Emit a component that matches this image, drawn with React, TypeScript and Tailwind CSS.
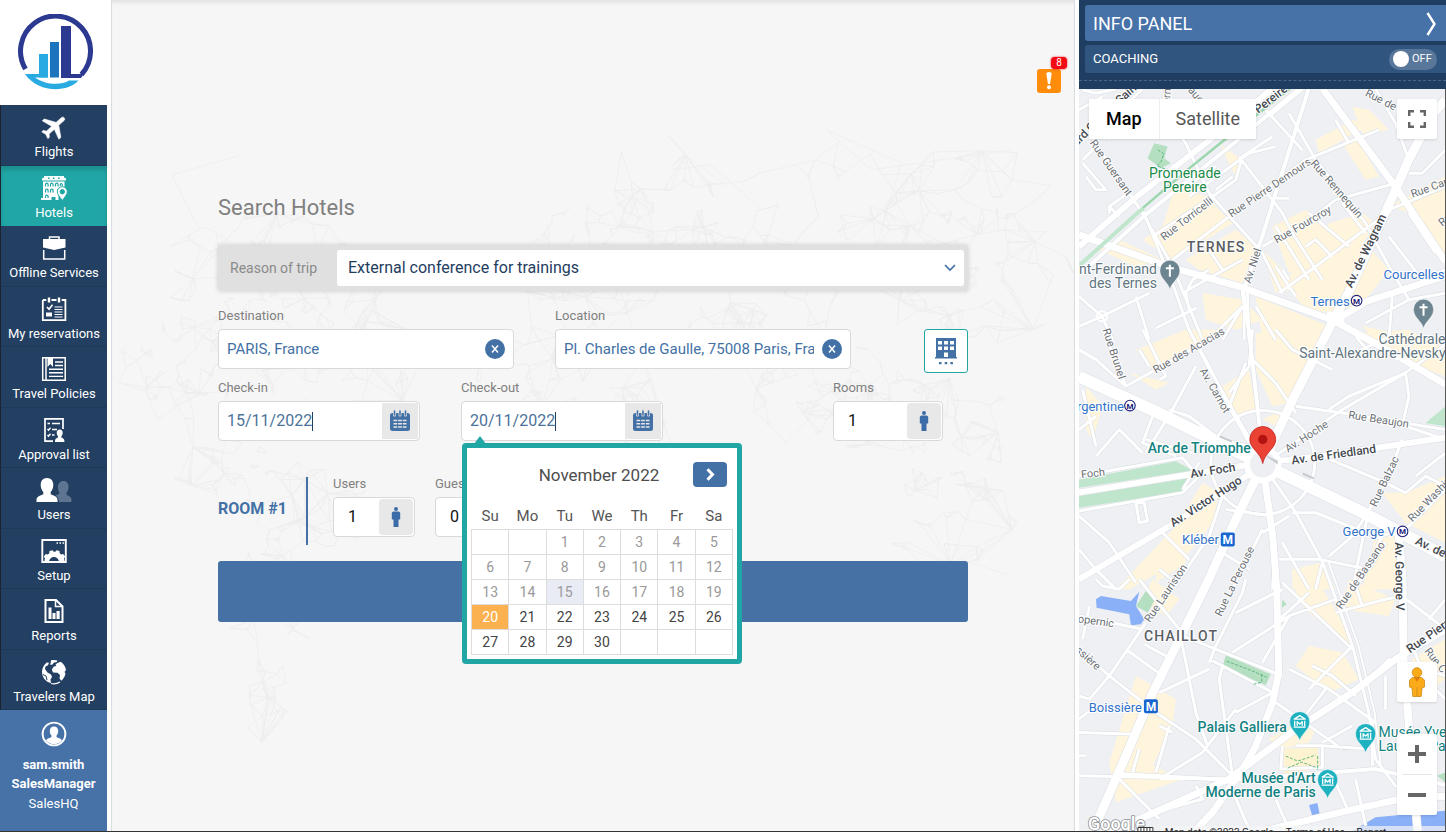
import React from "react";

type IconProps = { className?: string };

/* ---------- Logo and icons ---------- */

function Logo() {
  return (
    <svg width="76" height="76" viewBox="0 0 76 76" aria-label="Company logo" role="img">
      <path d="M8.500 55A35 35 0 1 1 64.500 60.500" fill="none" stroke="#2b3990" strokeWidth="5" />
      <path d="M44 12h10v48h8.500l5-1-3.500 5H44z" fill="#2b3990" />
      <rect x="33" y="28" width="9" height="35.500" fill="#1c75bc" />
      <path d="M22 40h9v23.500h-9z" fill="#29abe2" />
      <path d="M8 60h22.500v3.500H18c10 7.500 26 8 34 3h9.500C50 79 21 79 8 60z" fill="#29abe2" />
    </svg>
  );
}

function Svg({ children }: { children: React.ReactNode }) {
  return (
    <svg width="28" height="26" viewBox="0 0 28 26" fill="none" stroke="#fff" strokeWidth="1.500" aria-hidden="true">
      {children}
    </svg>
  );
}

const PlaneIcon = () => (
  <Svg>
    <path
      transform="translate(14.500 12.500) rotate(48) scale(1.3) translate(-11.500 -12)"
      fill="#fff"
      stroke="#fff"
      strokeWidth=".5"
      strokeLinejoin="round"
      d="M21 16v-2l-8-5V3.500c0-.83-.67-1.500-1.500-1.500S10 2.670 10 3.500V9l-8 5v2l8-2.500V19l-2 1.500V22l3.500-1 3.500 1v-1.500L13 19v-5.500l8 2.500z"
    />
  </Svg>
);

const HotelIcon = () => (
  <Svg>
    <path fill="#fff" stroke="none" d="M4 1h20v1.500l2 1v2H2v-2l2-1zM3 6.500h21.500V13h-3l-3 2v10h-3v-3h-4v3H1v-2h2z" />
    <g fill="#21a6a6" stroke="none">
      <rect x="8" y="2.500" width="1.500" height="1.500" />
      <rect x="13" y="2.500" width="1.500" height="1.500" />
      <rect x="18" y="2.500" width="1.500" height="1.500" />
    </g>
    <g stroke="#21a6a6" strokeWidth="1.200">
      <path d="M5.500 11.500V9.500a1.300 1.300 0 0 1 2.600 0v2M10.500 11.500V9.500a1.300 1.300 0 0 1 2.600 0v2M15.500 11.500V9.500a1.300 1.300 0 0 1 2.600 0v2M20.300 11V9.500a1 1 0 0 1 2 0V11" />
      <path d="M5.500 17.500V15.500a1.300 1.300 0 0 1 2.600 0v2M10.500 17.500V15.500a1.300 1.300 0 0 1 2.600 0v2M5.500 23v-1.500a1.300 1.300 0 0 1 2.600 0V23" />
    </g>
    <path fill="#fff" stroke="#21a6a6" strokeWidth="1" fillRule="evenodd" d="M22.300 25.500c-3-4-5-6.300-5-8.800a5 5 0 0 1 10 0c0 2.500-2 4.800-5 8.800zm0-11a2.200 2.200 0 1 0 0 4.400 2.200 2.200 0 0 0 0-4.400z" />
  </Svg>
);

const BriefcaseIcon = () => (
  <Svg>
    <path d="M9.500 4V2h9.500v2" />
    <path fill="#fff" stroke="none" d="M3 4h22.500v8.500L14.200 15 3 12.500z" />
    <path d="M3.700 15v9h21v-9" />
  </Svg>
);

const ReservationsIcon = () => (
  <Svg>
    <path strokeWidth="1.800" d="M2.800 4h3.500M11.500 4h5M21.700 4h3.700v20.200H2.800V4" />
    <path strokeWidth="2.400" d="M9 1.500v5M19 1.500v5" />
    <path strokeWidth="1.600" d="M7 11l2 2.300 3.500-4.600" />
    <path fill="#fff" stroke="none" d="M6 16.500h6v4H6z" />
    <path strokeWidth="1.100" d="M14.500 11h8M14.500 13.500h8M14.500 16h8M14.500 18.500h8M14.500 21h8" />
  </Svg>
);

const PoliciesIcon = () => (
  <Svg>
    <path d="M2.700 1.800h22.500v22.400H2.700zM6 2v22" />
    <path fill="#fff" stroke="none" d="M7.500 1.500h5.500V11l-2.700-3-2.800 3z" />
    <path strokeWidth="1.400" d="M15 6h8M15 9.500h8M9 13.200h14M9 16.800h14M9 20.400h14" />
  </Svg>
);

const ApprovalIcon = () => (
  <Svg>
    <path strokeWidth="1.700" d="M13 24.200H5V1.800h18V12" />
    <path strokeWidth="1.400" d="M7.500 6.500h2.500M12 6.500h8M12 12.500h5M12 18h2.500M7.500 12l1 1.200 2-2.400M7.500 18l1 1.200 2-2.400" />
    <path fill="#fff" stroke="none" d="M19.700 12.500c2 0 3 1.500 3 3.200 0 1.500-.7 2.700-1.300 3.500v1.300c1.500.8 3 1.200 3 3.500v1H15v-1c0-2.300 1.500-2.700 3-3.500v-1.300c-.7-.8-1.300-2-1.300-3.500 0-1.700 1-3.200 3-3.200z" />
  </Svg>
);

const UsersIcon = () => (
  <svg width="36" height="26" viewBox="0 0 36 26" aria-hidden="true">
    <path fill="#5d7590" d="M27.500 4c3.500 0 5 2.500 5 6 0 2.500-1 4.500-2 5.800v2c2.500 1.300 5 2 5 5.200v2H23c0-4-2-5.500-3.500-6.500 2-.8 4-1.200 4-2.700-1-1.300-1.500-3.300-1.500-5.800 0-3.500 2-6 5.500-6z" />
    <path fill="#fff" d="M11 1c4.300 0 6.300 3 6.300 7 0 3-1.200 5.500-2.600 7v2.300c3 1.500 6.800 2.200 6.800 5.700v2H.5v-2c0-3.500 3.800-4.200 6.800-5.700V15c-1.400-1.500-2.600-4-2.600-7 0-4 2-7 6.300-7z" />
  </svg>
);

const SetupIcon = () => (
  <Svg>
    <path strokeWidth="1.900" d="M2.300 2h23.500v22H2.300z" />
    <path strokeWidth="1.500" d="M16.500 5h1.500M19.500 5H21M22.500 5H24" />
    <path fill="#fff" stroke="none" d="M4.500 24c0-2 .2-2.500.5-3.500L3.800 18.500l2-2.500 2 .5 1.500-1.300.2-2.200 3-.8 1.200 1.600h1.600l1.200-1.600 3 .8.200 2.200 1.500 1.300 2-.5 2 2.500-1.200 2c.3 1 .5 1.500.5 3.500h-5.500a5 5 0 0 0-10 0z" />
  </Svg>
);

const ReportsIcon = () => (
  <Svg>
    <path strokeWidth="2" d="M5.500 2h10.500l6.500 6.500V24h-17z" />
    <path d="M15.500 2v6.500h7" strokeWidth="1.500" />
    <path fill="#fff" stroke="none" d="M8.500 9.500h3V21h-3zM12.500 15h3v6h-3zM16.500 13h3.200v8h-3.200z" />
  </Svg>
);

const GlobeIcon = () => (
  <Svg>
    <path fill="#fff" stroke="none" d="M11 1.300c2-.5 4.500-.4 6.500.3l-1 1.600-2.500.4-1.500 2-2.200.5zM17.500 4l3-1.200c3 1.800 5 4.600 5.500 8.200l-1.500 2 1 1.500c-.6 3-2 5.400-4.200 7.200l-1.800-2.200.5-3.500-2.500-2.200-4.500-.3-1.200-3 2-3 2.500-.5-.8-1.500z" />
    <path fill="#fff" stroke="none" d="M2 12.500c.2-3.500 2-6.800 4.800-9l2.200.2-1 2.500-2.500 1.300L5 10l2.500 3.500 3.500 2 1 2.500-1.500 2.500.5 3.500C6 23 2 18.500 2 12.500z" />
    <path strokeWidth="1.200" d="M11 24.500c3.500.8 6.500 0 9-1.500" />
    <path stroke="#22405f" strokeWidth="1" d="M3 15.500l3 1.500 1 4" />
  </Svg>
);

const ProfileIcon = () => (
  <Svg>
    <circle cx="14" cy="13" r="11.400" strokeWidth="1.900" />
    <path fill="#fff" stroke="none" d="M14 5.500c2.800 0 4.200 1.800 4.200 4.500 0 2-.8 3.500-1.700 4.500v1.600c1.800 1 4.200 1.300 5.500 3.400a10.400 10.400 0 0 1-16 0c1.300-2.100 3.700-2.400 5.500-3.400v-1.600c-.9-1-1.700-2.500-1.700-4.500 0-2.700 1.400-4.500 4.200-4.500z" />
  </Svg>
);

const CalendarIcon = () => (
  <svg width="22" height="22" viewBox="0 0 22 22" aria-hidden="true">
    <rect x="1" y="3" width="20" height="18" rx="2.500" fill="#4371a5" />
    <path d="M5.500 1v4M11 1v4M16.500 1v4" stroke="#e8e8e8" strokeWidth="3" strokeLinecap="round" />
    <path d="M5.500 1v4M11 1v4M16.500 1v4" stroke="#4371a5" strokeWidth="1.600" strokeLinecap="round" />
    <path d="M4.500 10.500h13M4.500 13.800h13M4.500 17h13" stroke="#e8e8e8" strokeWidth="1.500" strokeDasharray="3.700 .95" />
  </svg>
);

const PersonIcon = () => (
  <svg width="10" height="20" viewBox="0 0 10 20" fill="#3c6ca8" aria-hidden="true">
    <circle cx="5" cy="2" r="2" />
    <path d="M2.500 4.500h5A1.800 1.800 0 0 1 9.200 6v6.500H7.500V20h-5v-7.500H.8V6a1.800 1.800 0 0 1 1.700-1.500z" />
  </svg>
);

const BuildingIcon = () => (
  <svg width="24" height="28" viewBox="0 0 24 28" aria-hidden="true">
    <path fill="#4371a5" d="M2 1h20v19h1v1.500H1V20h1z" />
    <path fill="#fff" d="M4 4h4v3.500H4zM10 4h4v3.500h-4zM16 4h4v3.500h-4zM4 9.500h4V13H4zM10 9.500h4V13h-4zM16 9.500h4V13h-4zM10 15.500h4V20h-4z" />
    <path fill="#4371a5" d="M5 25h2.500v2.200H5zM10.700 25h2.500v2.200h-2.500zM16.400 25h2.500v2.200h-2.500z" />
  </svg>
);

const ChevronIcon = ({ className }: IconProps) => (
  <svg className={className} width="12" height="8" viewBox="0 0 12 8" fill="none" stroke="#4371a5" strokeWidth="1.700" aria-hidden="true">
    <path d="M1 1l5 5 5-5" />
  </svg>
);

/* ---------- Sidebar ---------- */

const navItems = [
  { label: "Flights", icon: <PlaneIcon /> },
  { label: "Hotels", icon: <HotelIcon />, active: true },
  { label: "Offline Services", icon: <BriefcaseIcon /> },
  { label: "My reservations", icon: <ReservationsIcon /> },
  { label: "Travel Policies", icon: <PoliciesIcon /> },
  { label: "Approval list", icon: <ApprovalIcon /> },
  { label: "Users", icon: <UsersIcon /> },
  { label: "Setup", icon: <SetupIcon /> },
  { label: "Reports", icon: <ReportsIcon /> },
  { label: "Travelers Map", icon: <GlobeIcon /> },
];

function Sidebar() {
  return (
    <div className="flex w-[107px] shrink-0 flex-col bg-white text-white">
      <div className="flex h-[105px] justify-center pt-[14px] pl-[3px]">
        <Logo />
      </div>
      <nav className="grid h-[605px] auto-rows-fr border-l border-[#1b2430]">
        {navItems.map((item) => (
          <a
            key={item.label}
            href="#"
            className={
              item.active
                ? "flex flex-col items-center bg-[#21a6a6] pt-[9px] shadow-[inset_0_4px_4px_rgba(0,0,0,0.15)]"
                : "flex flex-col items-center border-b border-[#1f3957] bg-[#233f61] pt-[9px]"
            }
          >
            {item.icon}
            <span className="mt-[3px] text-[13px] leading-[18px] whitespace-nowrap">{item.label}</span>
          </a>
        ))}
      </nav>
      <a href="#" className="flex flex-1 flex-col items-center bg-[#4672a8] pt-[11px] text-[13px] leading-5">
        <ProfileIcon />
        <span className="mt-2 leading-[19px] font-bold">sam.smith</span>
        <span className="font-bold leading-5">SalesManager</span>
        <span>SalesHQ</span>
      </a>
    </div>
  );
}

/* ---------- Network world map behind the form ---------- */

type Blob = [number, number, number, number, number];

const blobs: Blob[] = [
  [150, 300, 120, 90, 150],
  [230, 360, 90, 60, 90],
  [70, 380, 70, 60, 60],
  [110, 470, 50, 40, 40],
  [190, 520, 80, 60, 60],
  [160, 600, 60, 60, 40],
  [155, 700, 25, 60, 26],
  [480, 260, 80, 60, 90],
  [560, 190, 70, 60, 35],
  [450, 380, 90, 60, 70],
  [510, 470, 60, 80, 45],
  [620, 300, 120, 80, 110],
  [760, 220, 160, 80, 80],
  [860, 280, 110, 70, 90],
  [720, 400, 80, 60, 90],
  [820, 430, 80, 70, 100],
  [840, 520, 70, 50, 35],
  [900, 180, 60, 40, 12],
];

function buildNetwork() {
  let seed = 7;
  const rand = () => {
    seed = (seed * 16807) % 2147483647;
    return seed / 2147483647;
  };
  const points: [number, number][] = [];
  for (const [cx, cy, rx, ry, n] of blobs) {
    for (let i = 0; i < n; i++) {
      const a = rand() * Math.PI * 2;
      const r = Math.pow(rand(), 0.7);
      points.push([Math.round(cx + Math.cos(a) * r * rx), Math.round(cy + Math.sin(a) * r * ry)]);
    }
  }
  let d = "";
  points.forEach(([x, y], i) => {
    points
      .map(([px, py], j) => ({ j, dist: (px - x) ** 2 + (py - y) ** 2 }))
      .filter((p) => p.j !== i)
      .sort((a, b) => a.dist - b.dist)
      .slice(0, i % 11 === 0 ? 12 : 2)
      .forEach((p) => {
        d += `M${x} ${y}L${points[p.j][0]} ${points[p.j][1]}`;
      });
  });
  return { d, points };
}

const network = buildNetwork();

function NetworkBackdrop() {
  return (
    <svg
      className="absolute inset-0 h-full w-full"
      viewBox="0 0 963 832"
      preserveAspectRatio="xMidYMin slice"
      fill="none"
      stroke="#eeeeee"
      strokeWidth=".8"
      aria-hidden="true"
    >
      <path d={network.d} />
      <path d="M60 175L130 155M60 175L85 225M715 130L790 163L770 230M715 130L760 170L900 150M560 170L600 165L650 210M850 560L895 575" />
      {network.points
        .filter((_, i) => i % 8 === 0)
        .map(([x, y], i) => (
          <circle key={i} cx={x} cy={y} r="2" />
        ))}
    </svg>
  );
}

/* ---------- Search form ---------- */

const labelClass = "mb-[3px] block text-[13px] leading-5 text-[#808080]";
const boxClass = "flex h-10 items-center rounded-sm border border-[#d9d9d9] bg-white";

function PlaceField({ id, label, value }: { id: string; label: string; value: string }) {
  return (
    <div className="w-[296px]">
      <label htmlFor={id} className={labelClass}>
        {label}
      </label>
      <div className={boxClass + " pr-2 pl-2"}>
        <input id={id} defaultValue={value} className="w-0 flex-1 bg-transparent text-[15px] text-[#4371a5] outline-none" />
        <button
          type="button"
          aria-label={"Clear " + label}
          className="ml-2 flex size-5 items-center justify-center rounded-full bg-[#4371a5]"
        >
          <svg width="8" height="8" viewBox="0 0 8 8" stroke="#fff" strokeWidth="1.500" aria-hidden="true">
            <path d="M1 .5l6 7M7 .5l-6 7" />
          </svg>
        </button>
      </div>
    </div>
  );
}

function DateField({ id, label, value, children }: { id: string; label: string; value: string; children?: React.ReactNode }) {
  return (
    <div className="relative w-[202px]">
      <label htmlFor={id} className={labelClass}>
        {label}
      </label>
      <div className={boxClass + " justify-between p-px pl-2"}>
        <span className="flex items-center">
          <input
            id={id}
            defaultValue={value}
            className="[field-sizing:content] bg-transparent text-base text-[#4c7399] outline-none"
          />
          <span className="h-[19px] w-px bg-[#233f61]" />
        </span>
        <button type="button" aria-label={"Open " + label + " calendar"} className="flex h-9 w-9 items-center justify-center bg-[#e8e8e8]">
          <CalendarIcon />
        </button>
      </div>
      {children}
    </div>
  );
}

function CountField({ id, label, value, wide }: { id: string; label: string; value: string; wide?: boolean }) {
  return (
    <div className={wide ? "w-[110px]" : "w-[82px]"}>
      <label htmlFor={id} className={labelClass}>
        {label}
      </label>
      <div className={boxClass + " p-px pl-[14px]"}>
        <input id={id} defaultValue={value} className="w-0 flex-1 bg-transparent text-base text-[#111] outline-none" />
        <span className="flex h-9 w-[34px] items-center justify-center rounded-sm bg-[#e8e8e8]">
          <PersonIcon />
        </span>
      </div>
    </div>
  );
}

const weekdays = ["Su", "Mo", "Tu", "We", "Th", "Fr", "Sa"];
const weeks: (number | null)[][] = [
  [null, null, 1, 2, 3, 4, 5],
  [6, 7, 8, 9, 10, 11, 12],
  [13, 14, 15, 16, 17, 18, 19],
  [20, 21, 22, 23, 24, 25, 26],
  [27, 28, 29, 30, null, null, null],
];

function dayClass(day: number) {
  if (day === 20) return "block h-6 w-full bg-[#fcb150] text-sm text-white";
  if (day === 15) return "block h-6 w-full bg-[#e9ecf5] text-sm text-[#999]";
  if (day < 20) return "block h-6 w-full text-sm text-[#999]";
  return "block h-6 w-full text-sm text-[#444]";
}

function CalendarPopup() {
  return (
    <div className="absolute top-[65px] left-px z-10 w-[280px] rounded-sm border-[5px] border-[#21a6a6] bg-white px-1 pb-1">
      <svg className="absolute -top-3 left-[7px]" width="12" height="8" viewBox="0 0 12 8" aria-hidden="true">
        <path d="M6 0l6 8H0z" fill="#21a6a6" />
      </svg>
      <div className="grid h-14 grid-cols-[1fr_auto_1fr] items-center pr-1.5">
        <span className="w-9" />
        <span className="text-[17px] text-[#4d4d4d]">November 2022</span>
        <button
          type="button"
          aria-label="Next month"
          className="mb-1 flex h-[25px] w-[34px] items-center justify-center justify-self-end rounded-sm bg-[#4371a5]"
        >
          <svg width="9" height="13" viewBox="0 0 9 13" fill="none" stroke="#fff" strokeWidth="3" aria-hidden="true">
            <path d="M1.500 1.200l5 5.300-5 5.300" />
          </svg>
        </button>
      </div>
      <table className="w-full table-fixed border-collapse">
        <thead>
          <tr>
            {weekdays.map((d) => (
              <th key={d} className="h-[25px] p-0 text-[15px] leading-6 font-normal text-[#555]">
                {d}
              </th>
            ))}
          </tr>
        </thead>
        <tbody>
          {weeks.map((week, i) => (
            <tr key={i}>
              {week.map((day, j) => (
                <td key={j} className="h-[25px] border border-[#ddd] p-0 text-center">
                  {day && (
                    <button type="button" disabled={day < 20} className={dayClass(day)}>
                      {day}
                    </button>
                  )}
                </td>
              ))}
            </tr>
          ))}
        </tbody>
      </table>
    </div>
  );
}

function SearchForm() {
  return (
    <form className="relative mx-auto w-full max-w-[750px] pt-[193px]">
      <h1 className="text-[22px] leading-[30px] text-[#808080]">Search Hotels</h1>
      <div className="mt-[22px] flex h-[46px] items-center rounded-sm bg-[#e0e0e0] pr-1 pl-3 shadow-[0_0_5px_rgba(0,0,0,0.18)]">
        <label htmlFor="reason" className="w-[107px] text-sm text-[#8a8a8a]">
          Reason of trip
        </label>
        <div className="relative flex-1">
          <select
            id="reason"
            className="h-9 w-full appearance-none rounded-[3px] bg-white pr-8 pl-[11px] text-base text-[#1f3d5f] outline-none"
          >
            <option>External conference for trainings</option>
          </select>
          <ChevronIcon className="pointer-events-none absolute top-[14px] right-2" />
        </div>
      </div>
      <div className="mt-[15px] flex items-end">
        <PlaceField id="destination" label="Destination" value="PARIS, France" />
        <div className="ml-[41px]">
          <PlaceField id="location" label="Location" value="Pl. Charles de Gaulle, 75008 Paris, France" />
        </div>
        <button
          type="button"
          aria-label="Hotel filters"
          className="-mb-1 ml-auto flex size-11 items-center justify-center rounded-[3px] border border-[#21a6a6] bg-white"
        >
          <BuildingIcon />
        </button>
      </div>
      <div className="mt-[9px] flex pr-[25px]">
        <DateField id="checkin" label="Check-in" value="15/11/2022" />
        <div className="ml-[41px]">
          <DateField id="checkout" label="Check-out" value="20/11/2022">
            <CalendarPopup />
          </DateField>
        </div>
        <div className="ml-auto">
          <CountField id="rooms" label="Rooms" value="1" wide />
        </div>
      </div>
      <div className="mt-[33px] flex">
        <div className="mt-[3px] flex h-[68px] w-[90px] items-center border-r-2 border-[#4371a5] pb-1">
          <span className="text-base font-bold text-[#4371a5]">ROOM #1</span>
        </div>
        <div className="ml-[25px] flex gap-5">
          <CountField id="users" label="Users" value="1" />
          <CountField id="guests" label="Guests" value="0" />
        </div>
      </div>
      <button type="submit" aria-label="Search" className="mt-4 block h-[61px] w-full rounded-[3px] bg-[#4571a5]" />
    </form>
  );
}

/* ---------- Street map ---------- */

/* Tiles hold coordinates at triple scale; each is shifted down by its offset. */
const tiles = [
  {
    dy: 0,
    yellow:
      "M300 310L390 350L470 430L340 510L290 540L200 480L260 440ZM70 510L130 480L260 540L180 560ZM330 540L480 450L540 500L500 610L370 570ZM720 180L830 120L890 130L730 220ZM800 190L840 170L910 290L870 300ZM590 440L690 390L780 470L720 540L640 580ZM760 430L860 400L900 430L850 510L720 620L600 640L560 510L640 590ZM650 640L860 480L940 570L870 660L780 700L700 700ZM940 380L1110 290L1110 560L1010 400ZM380 640L500 660L560 720L480 750L390 720ZM540 650L760 740L700 780L560 780ZM430 190L500 240L480 290ZM830 80L880 90L940 150L860 160ZM860 740L1110 790L900 780Z",
    minor:
      "M20 30L60 40L120 27M45 170L200 400L290 560L380 780M9 90L80 50M270 27L265 60M200 27L60 160M230 60L330 190L400 340L470 420L560 520L620 640M490 230L620 400L650 460L740 600M570 90L680 210M640 100L720 240L870 430L940 560L1000 660M800 370L870 460M290 540L460 410L690 240L910 150M230 470L410 350L480 300L500 230L590 170M340 350L520 220L600 200M330 320L420 260M560 500L700 420L780 360L960 310M900 27L960 130L1000 240M1000 280L1040 280L1110 210M940 390L1110 320M610 640L720 560L880 440L950 390M78 710L9 650M9 740L78 710L220 640M78 710L110 780M180 650L220 780M340 690L330 640L350 600L400 570M240 745L360 685M500 680L440 780M515 640L520 780M505 640L505 780M540 680L600 780M400 780L500 680M100 380L170 330M130 410L100 380L100 400M20 250L90 330L60 330L30 290M20 240L60 200M600 355L640 355M690 500L720 480L770 530M600 560L660 650M640 600L620 570M870 730L1000 660L1110 640M950 650L940 780M320 640L500 540M600 440L700 600M700 400L820 500M780 120L820 190M940 470L1040 600L1110 570M1000 400L1080 520M580 110L680 27M60 100L100 180M380 480L440 570M420 330L470 290",
  },
  {
    dy: 750,
    yellow:
      "M180 60L330 0L450 0L350 60L240 130ZM540 10L740 10L640 220L590 230L540 120ZM440 170L520 120L540 240L480 260ZM160 130L280 160L240 180ZM30 170L80 230L50 330L30 300ZM380 460L430 490L410 580L330 680L230 740L160 780L120 780L300 590ZM560 270L620 240L600 290ZM920 490L990 490L1110 440L1110 640L990 580ZM240 660L320 640L330 700L240 760ZM900 620L960 600L970 780L860 780ZM850 10L1000 0L1110 60L1110 140L960 90ZM650 720L740 700L780 780L650 780Z",
    minor:
      "M80 0L150 170M150 170L240 120L430 10M150 170L60 90L9 60M20 180L60 350M9 300L60 260M190 60L220 110M200 0L270 140L250 150M360 110L290 240L210 370M280 240L340 260L420 320M460 190L520 110L530 0M510 100L460 230M340 0L400 110L470 250L520 340M530 90L600 160L660 250M600 0L650 60L770 120M660 230L800 250L1110 300M990 130L1000 200L980 290M760 240L820 200L990 130M740 380L930 460L990 490L1050 440L1110 470M980 330L930 460L880 540L830 780M1110 480L1000 590L920 620L840 780M9 560L100 640L180 760M250 600L340 690M440 500L400 620L290 780M440 670L520 720M450 540L590 560M560 600L470 780M610 690L730 690L880 720M650 550L720 550L920 630M640 560L560 610M760 680L830 620L870 560M60 380L130 300L200 370M210 330L350 370M230 260L200 340L300 380M180 520L190 580L215 575L205 520ZM370 400L320 480M9 440L320 385L350 420M9 545L320 490L370 440M740 700L720 780M880 720L930 640M840 20L900 90M860 60L940 20M960 90L1030 20M9 660L60 720L120 780M600 640L590 780M1020 440L1110 370L1110 380M990 290L1110 330M430 330L520 350M250 720L300 760M620 640L700 780",
  },
  {
    dy: 1500,
    yellow:
      "M230 0L310 60L270 110L200 60ZM180 290L300 360L290 440L230 560L320 600L120 670L100 550ZM650 40L720 0L760 60L830 180L830 200L700 100ZM700 200L800 220L850 300L760 340L660 260ZM580 480L660 430L720 450L700 490L620 510ZM820 0L960 60L940 110L800 90ZM1010 240L1110 180L1110 300L1030 350Z",
    minor:
      "M60 0L80 20L130 30L160 0M9 110L200 150M40 80L20 180M210 130L100 290L40 360M9 420L60 380M9 210L100 290L240 400L360 480L480 600M150 210L260 290M205 195L270 230M190 0L310 150L360 400L395 500M320 170L470 230L620 290M400 250L420 200L500 40L510 0M400 240L440 260L430 300L470 590M440 260L590 340M250 340L400 270M480 100L620 30M470 220L640 110L780 60M620 10L830 210M700 40L600 130M640 270L760 330L900 430M600 370L700 440L800 510M750 330L680 420M740 490L830 440M780 100L930 60L980 50L1110 150M830 200L700 330M710 260L770 290L840 350M9 460L180 465M9 590L460 600M130 600L250 720M190 510L170 580M280 440L240 580M250 440L290 460M480 390L380 520L250 600M590 340L480 400M840 600L870 740M780 610L820 700M600 660L640 752M620 500L615 570L740 565L740 500L660 500M740 500L880 510M890 420L890 560M930 290L930 390M840 20L860 80M860 320L940 240L1110 290M1010 200L1050 300L1110 360M9 530L30 530M9 350L40 360M560 250L640 110M460 610L520 752M360 620L380 660L240 700M1060 120L1110 60",
  },
];

const majors: { d: string; w: number }[] = [
  { d: "M1079 247L1139 195L1223 130L1272 89", w: 6 },
  { d: "M1086 269L1148 213L1243 136L1299 89", w: 4 },
  { d: "M1079 235L1169 267L1243 288L1335 321L1366 302L1446 276", w: 7 },
  { d: "M1323 89L1396 187L1446 262", w: 7 },
  { d: "M1265 460L1293 400L1336 316L1349 293L1396 190L1409 160L1434 113L1446 100", w: 9 },
  { d: "M1336 322L1396 355L1446 385", w: 7 },
  { d: "M1336 312v14", w: 18 },
  { d: "M1079 377L1160 414L1263 465L1363 513L1446 557", w: 12 },
  { d: "M1079 493L1189 475L1263 463L1319 457L1446 438", w: 6 },
  { d: "M1079 580L1169 527L1263 466", w: 6 },
  { d: "M1263 465L1236 520L1209 580L1186 627L1153 693L1119 773L1093 832", w: 9 },
  { d: "M1263 465L1273 537L1277 590L1279 673L1273 703L1256 747L1243 770L1213 813L1195 832", w: 7 },
  { d: "M1263 465L1296 513L1323 563L1353 647L1369 713L1376 760L1396 787L1446 800", w: 3 },
  { d: "M1329 563L1359 647L1375 713L1381 765", w: 2 },
  { d: "M1263 465L1343 410L1406 373L1446 345", w: 3 },
  { d: "M1263 460L1258 410L1249 330L1243 293L1263 235L1276 193L1309 89", w: 4 },
  { d: "M1263 462L1206 363L1189 330L1175 290L1142 208", w: 3 },
  { d: "M1399 533L1403 580L1404 660L1413 770L1418 832", w: 8 },
  { d: "M1446 630L1396 660L1353 693L1296 730L1229 780L1140 820L1110 832", w: 7 },
  { d: "M1119 775L1229 781L1376 770L1446 786", w: 4 },
  { d: "M1263 832L1346 812L1396 801L1446 797", w: 7 },
];

type MapLabel = { t: string; x: number; y: number; r?: number; s?: number; c?: string; b?: boolean; a?: "start" | "end" | "middle" };

const streetLabels: MapLabel[] = [
  { t: "Rue Guersant", x: 1111, y: 168, r: 55, s: 11 },
  { t: "Rue Torricelli", x: 1187, y: 219, r: -38, s: 11 },
  { t: "Rue Pierre Demours", x: 1270, y: 188, r: -34, s: 11 },
  { t: "Rue Rennequin", x: 1337, y: 189, r: 49, s: 11 },
  { t: "Rue Fourcroy", x: 1303, y: 225, r: -30, s: 11 },
  { t: "Rue Cardinet", x: 1441, y: 184, r: -20, s: 11 },
  { t: "Rue de Prony", x: 1395, y: 107, r: 27, s: 11 },
  { t: "Rue de Courcelles", x: 1474, y: 196, r: -40, s: 11 },
  { t: "ern", x: 1167, y: 96, r: -86, s: 11 },
  { t: "auc", x: 1196, y: 95, r: 50, s: 11 },
  { t: "Av. Niel", x: 1253, y: 266, r: -72, s: 11 },
  { t: "Rue Brunel", x: 1114, y: 354, r: 72, s: 11 },
  { t: "Rue des Acacias", x: 1189, y: 351, r: -30, s: 11 },
  { t: "Av. Carnot", x: 1215, y: 391, r: 60, s: 11 },
  { t: "Rue Beaujon", x: 1379, y: 420, r: 9, s: 11 },
  { t: "Av. Hoche", x: 1307, y: 437, r: -33, s: 11 },
  { t: "Foch", x: 1093, y: 474, r: -6, s: 11 },
  { t: "Rue Balzac", x: 1385, y: 482, r: -65, s: 11 },
  { t: "Rue Washington", x: 1438, y: 492, r: -46, s: 11 },
  { t: "Rue de Bassano", x: 1361, y: 576, r: -56, s: 11 },
  { t: "Rue La Perouse", x: 1235, y: 582, r: -64, s: 11 },
  { t: "Rue Lauriston", x: 1166, y: 594, r: -56, s: 11 },
  { t: "opernic", x: 1096, y: 622, r: 8, s: 11 },
  { t: "ssière", x: 1088, y: 659, r: 42, s: 11 },
  { t: "Rue C", x: 1436, y: 661, r: 52, s: 11 },
  { t: "Av. de Wagram", x: 1366, y: 251, r: -64, s: 12, b: true },
  { t: "Pereire", x: 1271, y: 99, r: -38, s: 12, b: true },
  { t: "Sain", x: 1126, y: 94, r: -42, s: 12, b: true },
  { t: "ard G", x: 1084, y: 134, r: -45, s: 12, b: true },
  { t: "Av. Foch", x: 1213, y: 471, r: -9, s: 12, b: true },
  { t: "Av. Victor Hugo", x: 1206, y: 502, r: -33, s: 12, b: true },
  { t: "Av. de Friedland", x: 1334, y: 455, r: -8, s: 12, b: true },
  { t: "Av. des", x: 1434, y: 549, r: 25, s: 12, b: true },
  { t: "Av. George V", x: 1400, y: 577, r: 89, s: 12, b: true },
  { t: "Rue Pierre", x: 1431, y: 635, r: -35, s: 12, b: true },
];

const placeLabels: MapLabel[] = [
  { t: "Promenade", x: 1185, y: 178, s: 14, c: "#188b47" },
  { t: "Pereire", x: 1185, y: 192, s: 14, c: "#188b47" },
  { t: "nt-Ferdinand", x: 1157, y: 274, s: 14, c: "#607580", a: "end" },
  { t: "des Ternes", x: 1157, y: 288, s: 14, c: "#607580", a: "end" },
  { t: "Courcelles", x: 1384, y: 279, s: 13, c: "#3273c9", a: "start" },
  { t: "Ternes", x: 1350, y: 306, s: 13, c: "#3273c9", a: "end" },
  { t: "rgentine", x: 1124, y: 411, s: 13, c: "#3273c9", a: "end" },
  { t: "Cathédrale", x: 1446, y: 344, s: 14, c: "#607580", a: "end" },
  { t: "Saint-Alexandre-Nevsky", x: 1446, y: 358, s: 14, c: "#607580", a: "end" },
  { t: "Arc de Triomphe", x: 1251, y: 454, s: 14, c: "#128181", b: true, a: "end" },
  { t: "Kléber", x: 1219, y: 545, s: 13, c: "#3273c9", a: "end" },
  { t: "George V", x: 1396, y: 537, s: 13, c: "#3273c9", a: "end" },
  { t: "Boissière", x: 1142, y: 713, s: 13, c: "#3273c9", a: "end" },
  { t: "Palais Galliera", x: 1287, y: 733, s: 14, c: "#128181", b: true, a: "end" },
  { t: "Musée d'Art", x: 1316, y: 784, s: 14, c: "#128181", b: true, a: "end" },
  { t: "Moderne de Paris", x: 1316, y: 798, s: 14, c: "#128181", b: true, a: "end" },
  { t: "Musée Yves", x: 1379, y: 738, s: 14, c: "#128181", a: "start" },
  { t: "Laurent Paris", x: 1379, y: 752, s: 14, c: "#128181", a: "start" },
];

function MapText({ l }: { l: MapLabel }) {
  return (
    <text
      x={l.x}
      y={l.y}
      fontSize={l.s}
      fontWeight={l.b ? 500 : 400}
      fill={l.c ?? (l.b ? "#45494f" : "#6b7076")}
      textAnchor={l.a ?? "middle"}
      dominantBaseline={l.r === undefined ? undefined : "central"}
      transform={l.r ? `rotate(${l.r} ${l.x} ${l.y})` : undefined}
    >
      {l.t}
    </text>
  );
}

function Pin({ x, y, color, children }: { x: number; y: number; color: string; children: React.ReactNode }) {
  return (
    <g transform={`translate(${x} ${y})`}>
      <path d="M0 28.500C-2 21-10 18-10 9.500a10 10 0 0 1 20 0C10 18 2 21 0 28.500z" fill={color} stroke="#fff" strokeWidth=".4" />
      {children}
    </g>
  );
}

const Museum = () => (
  <path d="M-5.500 7L0 3.500l5.500 3.500zM-5 8.500V14M5 8.500V14M-6 15H6M-2.500 13.500v-4l2.500 2.500 2.500-2.500v4" fill="none" stroke="#fff" strokeWidth="1.300" />
);
const Cross = () => <path d="M0 4v12M-4 7.500h8" stroke="#fff" strokeWidth="2" />;

const metroRings = [
  [1357, 301],
  [1130, 406],
  [1403, 532],
];
const metroSquares = [
  [1228, 540],
  [1151, 707],
];

function StreetMap() {
  return (
    <svg
      className="absolute inset-0 h-full w-full"
      viewBox="9 27 1101 2229"
      preserveAspectRatio="xMinYMin slice"
      fontFamily="Roboto, sans-serif"
      role="img"
      aria-label="Map around the Arc de Triomphe"
    >
      <rect x="0" y="0" width="4000" height="4000" fill="#eef0f3" />
      {tiles.map((t) => (
        <path key={t.dy} d={t.yellow} transform={`translate(0 ${t.dy})`} fill="#fef5dc" />
      ))}
      <path d="M9 1200L300 1145L345 1170L340 1175L9 1225ZM9 1250L345 1195L315 1238L9 1285ZM1050 1030L1110 980L1110 1040Z" fill="#bfe5cc" />
      <path d="M215 235L235 190L275 200L265 235L285 250L255 265ZM450 1728L585 1785L570 1818L440 1762ZM180 1580L210 1535L235 1565L215 1600ZM620 1560L632 1575L618 1585ZM1085 2090L1110 2080V2110Z" fill="#b4dfc1" />
      <path d="M60 1560L75 1550L165 1565L190 1537L180 1580L205 1620L195 1635L165 1638L160 1605L62 1585ZM700 2178L725 2172L732 2205L710 2212ZM830 2256L900 2215L1110 2195V2256Z" fill="#8ab0f8" />
      <path d="M622 2010L725 2005L735 2070L625 2085Z" fill="#fdf3d0" />
      {tiles.map((t) => (
        <path key={t.dy} d={t.minor} transform={`translate(0 ${t.dy})`} fill="none" stroke="#d9dde4" strokeWidth="12" strokeLinejoin="round" />
      ))}
      <g transform="translate(-3228 -240) scale(3)" fill="none" stroke="#d9dde4" strokeLinejoin="round">
        {majors.map((m) => (
          <path key={m.d} d={m.d} strokeWidth={m.w + 1} />
        ))}
        <circle cx="1263" cy="463" r="52" strokeWidth="4" />
        <circle cx="1263" cy="465" r="16" strokeWidth="7" />
      </g>
      {tiles.map((t) => (
        <path key={t.dy} d={t.minor} transform={`translate(0 ${t.dy})`} fill="none" stroke="#fff" strokeWidth="9" strokeLinejoin="round" />
      ))}
      <g transform="translate(-3228 -240) scale(3)" strokeLinejoin="round">
        <g fill="none" stroke="#fff">
          {majors.map((m) => (
            <path key={m.d} d={m.d} strokeWidth={m.w} />
          ))}
          <circle cx="1263" cy="463" r="52" strokeWidth="3" />
          <circle cx="1102" cy="316.500" r="5" strokeWidth="2" />
        </g>
        <circle cx="1263" cy="465" r="16" fill="#edeff2" stroke="#fff" strokeWidth="6" />
        <path d="M1264 455l14 6v4z" fill="#c9ccd0" />
        <path d="M1079 266L1140 211L1144 209" stroke="#c0e6cd" strokeWidth="4" fill="none" />
        <path d="M1143 208L1190 168L1222 142L1290 89" stroke="#9cd6ae" strokeWidth="2.500" fill="none" />
        <path d="M1227 662l16 6 10 4 14 6M1262 675v8l-8 2M1158 150l6 4-3 8-4 4 8 3M1286 757l12 5 18-6M1288 769l14-6 16 6M1318 757v14" stroke="#5fb67d" strokeWidth="1" strokeDasharray="3 1.500" fill="none" />
        <path d="M1220 437l12 5M1303 474l11 5" stroke="#c9ccd0" strokeWidth="2" />

        <g stroke="#fff" strokeWidth="2" paintOrder="stroke">
          {streetLabels.map((l) => (
            <MapText key={l.t} l={l} />
          ))}
          {placeLabels.map((l) => (
            <MapText key={l.t} l={l} />
          ))}
          <text x="1187" y="252" fontSize="14" fontWeight="500" letterSpacing="1.200" fill="#5a5e64">TERNES</text>
          <text x="1144" y="642" fontSize="14" fontWeight="500" letterSpacing="1.200" fill="#5a5e64">CHAILLOT</text>
        </g>

        {metroRings.map(([x, y]) => (
          <g key={x}>
            <circle cx={x} cy={y} r="5.300" fill="#fff" stroke="#20207a" strokeWidth="1.100" />
            <text x={x} y={y + 3} fontSize="8" fontWeight="700" textAnchor="middle" fill="#20207a">M</text>
          </g>
        ))}
        {metroSquares.map(([x, y]) => (
          <g key={x}>
            <rect x={x - 7} y={y - 7} width="14" height="14" rx="2" fill="#1a66d1" />
            <text x={x} y={y + 4.500} fontSize="12" fontWeight="700" textAnchor="middle" fill="#fff">M</text>
          </g>
        ))}

        <Pin x={1170} y={261} color="#6d8590"><Cross /></Pin>
        <Pin x={1424} y={300} color="#6d8590"><Cross /></Pin>
        <Pin x={1300} y={713} color="#1eb1c0"><Museum /></Pin>
        <Pin x={1366} y={725} color="#1eb1c0"><Museum /></Pin>
        <Pin x={1328} y={771} color="#1eb1c0"><Museum /></Pin>
        <g transform="translate(1263 427)">
          <path d="M0 37C-2 26-13 22-13 13a13 13 0 0 1 26 0C13 22 2 26 0 37z" fill="#ea4335" stroke="#c5221f" strokeWidth=".8" />
          <circle cy="13" r="4.700" fill="#b31412" />
        </g>

        <text x="1088" y="831" fontSize="18" fontWeight="500" fill="#fff" stroke="#8c8f94" strokeWidth="1.600" paintOrder="stroke">Google</text>
        <path d="M1138 828.500h15v4h-15zM1141 828v4M1144 828v4M1147 828v4M1150 828v4" stroke="#333" strokeWidth="1" fill="#fff" />
        <path d="M1160 827h286v6h-286z" fill="#f5f5f5" opacity=".7" />
        <g fontSize="10" fill="#222">
          <text x="1165" y="836">Map data ©2022 Google</text>
          <text x="1286" y="836">Terms of Use</text>
          <text x="1357" y="836">Report</text>
        </g>
      </g>
    </svg>
  );
}

function InfoPanel() {
  return (
    <aside className="flex w-[367px] shrink-0 flex-col">
      <div className="h-[89px] bg-[#1f3d61] pt-[5px] pl-1.5">
        <button type="button" className="flex h-9 w-full items-center justify-between rounded-l-[3px] bg-[#4672a8] pt-px pr-[9px] pl-2 text-lg text-white">
          INFO PANEL
          <svg width="11" height="24" viewBox="0 0 11 24" fill="none" stroke="#fff" strokeWidth="2.400" aria-hidden="true">
            <path d="M1.500 1l7 11-7 11" />
          </svg>
        </button>
        <div className="mt-1 flex h-7 items-center justify-between rounded-l-[3px] bg-[#30557f] pr-[9px] pl-2 text-white">
          <span className="text-[13px]">COACHING</span>
          <button
            type="button"
            role="switch"
            aria-checked="false"
            aria-label="Coaching"
            className="flex h-[21px] w-12 items-center gap-[3px] rounded-full bg-[#59779a] pl-1 text-[11px]"
          >
            <span className="size-4 rounded-full bg-white" />
            OFF
          </button>
        </div>
        <div className="mt-[7px] -ml-1.5 border-t border-dashed border-[#48668a]" />
      </div>
      <div className="relative flex-1 overflow-hidden border-r border-[#555]">
        <StreetMap />
        <div className="absolute top-[10px] left-[10px] flex h-10 bg-white text-lg shadow-sm">
          <button type="button" className="border-r border-[#eee] px-[17px] font-medium text-black">
            Map
          </button>
          <button type="button" className="px-4 text-[#565656]">
            Satellite
          </button>
        </div>
        <button
          type="button"
          aria-label="Full screen"
          className="absolute top-[10px] right-[8px] flex size-10 items-center justify-center rounded-xs bg-white shadow-sm"
        >
          <svg width="18" height="18" viewBox="0 0 18 18" fill="none" stroke="#666" strokeWidth="2.400" aria-hidden="true">
            <path d="M1.200 6V1.200H6M12 1.200h4.800V6M16.800 12v4.800H12M6 16.800H1.200V12" />
          </svg>
        </button>
        <div className="absolute right-[8px] bottom-4 flex flex-col gap-8">
          <button type="button" aria-label="Street view" className="flex size-10 items-center justify-center rounded-xs bg-white shadow-sm">
            <svg width="18" height="30" viewBox="0 0 18 30" fill="#fbab1a" stroke="#c98a1c" strokeWidth=".8" aria-hidden="true">
              <path d="M4.500 10.500h9L16.500 13v7l-2.500 1-.8 8.500H4.800L4 21l-2.500-1v-7z" />
              <path d="M9 20v9" />
              <path d="M6 10l3 5 3-5z" fill="#e07d10" stroke="none" />
              <circle cx="9" cy="5.500" r="4.800" />
            </svg>
          </button>
          <div className="flex w-10 flex-col items-center rounded-xs bg-white shadow-sm">
            <button type="button" aria-label="Zoom in" className="flex h-10 w-full items-center justify-center">
              <svg width="18" height="18" viewBox="0 0 18 18" stroke="#666" strokeWidth="4" aria-hidden="true">
                <path d="M0 9h18M9 0v18" />
              </svg>
            </button>
            <div className="h-px w-[30px] bg-[#e6e6e6]" />
            <button type="button" aria-label="Zoom out" className="flex h-10 w-full items-center justify-center">
              <svg width="18" height="18" viewBox="0 0 18 18" stroke="#666" strokeWidth="4" aria-hidden="true">
                <path d="M0 9h18" />
              </svg>
            </button>
          </div>
        </div>
      </div>
    </aside>
  );
}

export default function App() {
  return (
    <div className="flex min-h-screen border-b border-[#333] bg-white font-['Roboto',sans-serif]">
      <Sidebar />
      <main className="relative mx-1 flex-1 border-x border-[#dadde0] bg-[#f6f6f6] shadow-[inset_0_5px_5px_-3px_rgba(0,0,0,0.1)]">
        <NetworkBackdrop />
        <SearchForm />
        <button
          type="button"
          aria-label="Alerts"
          className="absolute top-[69px] right-[13px] flex size-6 items-center justify-center rounded-[3px] bg-[#ff8c0a]"
        >
          <svg width="6" height="18" viewBox="0 0 6 18" fill="#fff" aria-hidden="true">
            <path d="M.3 1.500a2.700 1.500 0 0 1 5.400 0L4 12H2z" />
            <circle cx="3" cy="15.300" r="2" />
          </svg>
          <span className="absolute -top-3 -right-1.5 flex h-3 w-4 items-center justify-center rounded-sm bg-[#f40a12] text-[10px] leading-3 text-white shadow-[0_0_2px_#f40a12]">
            8
          </span>
        </button>
      </main>
      <InfoPanel />
    </div>
  );
}
